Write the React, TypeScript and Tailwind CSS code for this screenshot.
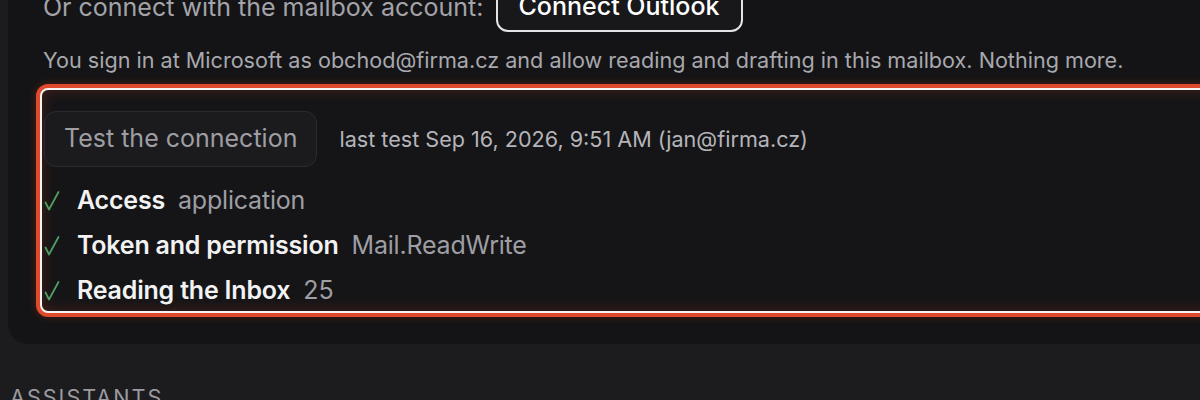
export default function App() {
  const checks = [
    { label: 'Access', value: 'application' },
    { label: 'Token and permission', value: 'Mail.ReadWrite' },
    { label: 'Reading the Inbox', value: '25' },
  ];

  return (
    <div className="w-[1200px] h-[400px] overflow-hidden bg-[#1c1c1f] font-['Inter',sans-serif]">
      {/* mailbox card, scrolled so its top is out of view */}
      <div className="ml-[8px] w-[1240px] -mt-[18px] rounded-b-[20px] bg-[#141416] pl-[35px] pb-[31px]">
        <div className="flex items-center gap-[12px]">
          <span className="text-[25px] leading-[32px] text-[#a3a3a9]">
            Or connect with the mailbox account:
          </span>
          <button className="h-[50px] rounded-[12px] border-2 border-[#e4e4e7] bg-[#18181b] px-[21px] text-[25px] font-medium text-white">
            Connect Outlook
          </button>
        </div>

        <p className="mt-[14px] text-[21.6px] leading-[28px] text-[#a8a8ae]">
          You sign in at Microsoft as obchod@firma.cz and allow reading and drafting in this mailbox. Nothing more.
        </p>

        {/* highlighted test block */}
        <div className="mt-[14px] -ml-[3px] rounded-[8px] border-2 border-[#f4f4f5] bg-[#151517] pl-[2px] pt-[21px] pb-[2px] shadow-[0_0_0_4px_#df4a2c,0_0_8px_4px_rgba(200,60,30,0.3),inset_0_0_14px_rgba(190,60,30,0.3)]">
          <div className="flex items-center gap-[22px]">
            <button className="h-[56px] rounded-[12px] border border-[#2b2b2f] bg-[#1b1b1e] px-[19px] text-[25px] text-[#9e9ea4]">
              Test the connection
            </button>
            <span className="text-[21.6px] text-[#b4b4ba]">
              last test Sep 16, 2026, 9:51 AM (jan@firma.cz)
            </span>
          </div>

          <div className="mt-[16px] flex flex-col gap-[9px]">
            {checks.map((c) => (
              <div key={c.label} className="flex h-[36px] items-center">
                <span className="w-[33px] flex items-center">
                  <svg width="16" height="22" viewBox="0 0 16 22" fill="none">
                    <path
                      d="M1.5 12.5L5 19.5L14.5 2"
                      stroke="#4f9d63"
                      strokeWidth="1.8"
                      strokeLinecap="round"
                      strokeLinejoin="round"
                    />
                  </svg>
                </span>
                <span className="text-[25px] font-semibold tracking-[-0.2px] text-[#f2f2f3]">{c.label}</span>
                <span className="ml-[13px] text-[25px] tracking-[-0.2px] text-[#9e9ea4]">{c.value}</span>
              </div>
            ))}
          </div>
        </div>
      </div>

      <h2 className="mt-[39px] ml-[10px] text-[21.6px] leading-[28px] uppercase tracking-[2px] text-[#9a9aa0]">
        Assistants
      </h2>
    </div>
  );
}
